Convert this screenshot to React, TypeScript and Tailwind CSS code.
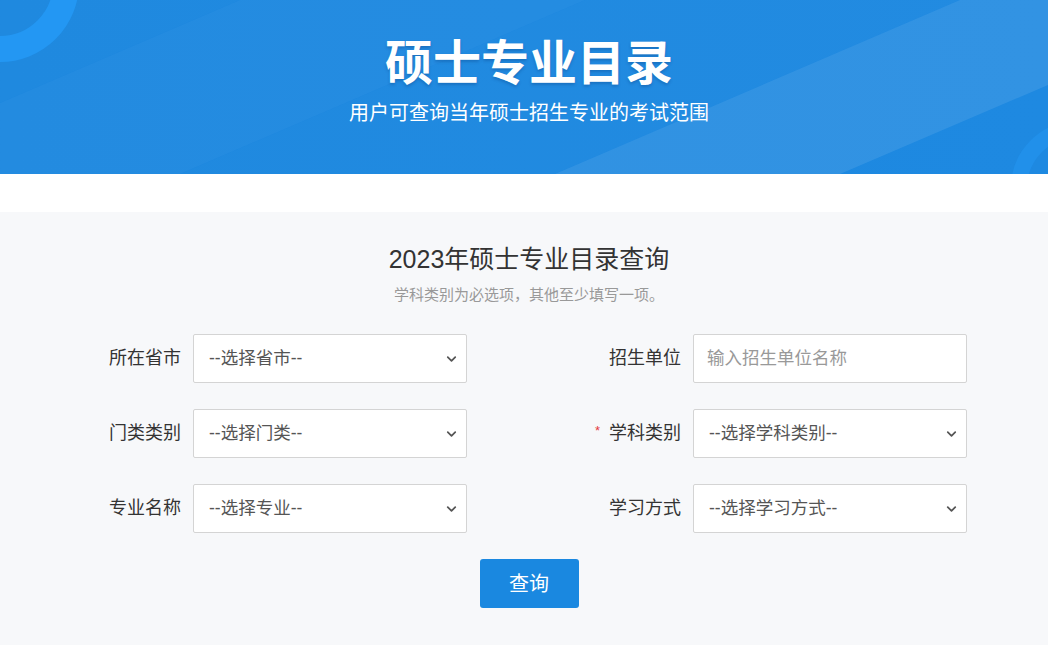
import React, { useState } from 'react';
import { ChevronDown } from 'lucide-react';

const FONT = "font-['Liberation_Sans','Noto_Sans_CJK_SC',sans-serif]";

interface FieldProps {
  label: string;
  required?: boolean;
  children: React.ReactNode;
}

const Field: React.FC<FieldProps> = ({ label, required, children }) => (
  <div className="flex items-center">
    <div className="w-[157px] pr-[12px] flex items-center justify-end text-[18px] text-[#333]">
      {required && <span className="text-[#e4393c] text-[13px] mr-[9px] -mt-[6px]">*</span>}
      {label}
    </div>
    <div className="w-[274px] h-[49px]">{children}</div>
  </div>
);

const SelectBox: React.FC<{ placeholder: string }> = ({ placeholder }) => {
  const [value, setValue] = useState('');
  return (
    <div className="relative w-full h-full">
      <select
        value={value}
        onChange={e => setValue(e.target.value)}
        className={`${FONT} appearance-none w-full h-full bg-white border border-[#d4d4d4] rounded-[2px] pl-[15px] pr-8 text-[17.5px] text-[#555] outline-none`}
      >
        <option value="">{placeholder}</option>
      </select>
      <ChevronDown
        size={15}
        strokeWidth={2.8}
        className="absolute right-[8px] top-1/2 -translate-y-1/2 text-[#555] pointer-events-none"
      />
    </div>
  );
};

const App: React.FC = () => {
  const [unit, setUnit] = useState('');

  return (
    <div className={`${FONT} w-full min-h-[652px] bg-white`}>
      {/* banner */}
      <div className="relative h-[174px] overflow-hidden bg-gradient-to-r from-[#1b87df] to-[#1e89e1]">
        <svg className="absolute inset-0 w-full h-full" viewBox="0 0 1048 174" preserveAspectRatio="none">
          <polygon points="0,0 240,0 0,103" fill="#ffffff" opacity="0.02" />
          <polygon points="0,103 240,0 585,0 180,174 0,174" fill="#ffffff" opacity="0.035" />
          <polygon points="585,0 960,0 555,174 180,174" fill="#ffffff" opacity="0.02" />
          <polygon points="555,174 960,0 1048,0 1048,85 840,174" fill="#ffffff" opacity="0.09" />
          <circle cx="0" cy="-17" r="66" fill="none" stroke="#2397f3" strokeWidth="26" />
          <circle cx="1078" cy="188" r="59" fill="none" stroke="#2190ea" strokeWidth="16" />
        </svg>
        <div className="relative flex flex-col items-center pt-[40px] pl-[10px] text-white">
          <h1 className="text-[48px] leading-[48px] font-bold [text-shadow:0_2px_3px_rgba(0,40,100,0.25)]">硕士专业目录</h1>
          <p className="mt-[15px] text-[20px] leading-[20px]">用户可查询当年硕士招生专业的考试范围</p>
        </div>
      </div>

      <div className="h-[38px] bg-white" />

      {/* query form */}
      <div className="bg-[#f7f8fa] pt-[35px] pb-[37px] pl-[10px]">
        <h2 className="text-center text-[25px] leading-[25px] text-[#333]">2023年硕士专业目录查询</h2>
        <p className="mt-[15px] text-center text-[15px] leading-[15px] text-[#999]">学科类别为必选项，其他至少填写一项。</p>

        <div className="mt-[32px] w-[1000px] ml-[26px] grid grid-cols-2 gap-y-[26px]">
          <Field label="所在省市">
            <SelectBox placeholder="--选择省市--" />
          </Field>
          <Field label="招生单位">
            <input
              value={unit}
              onChange={e => setUnit(e.target.value)}
              placeholder="输入招生单位名称"
              className={`${FONT} w-full h-full bg-white border border-[#d4d4d4] rounded-[2px] px-[13px] text-[17.5px] text-[#555] placeholder:text-[#999] outline-none`}
            />
          </Field>
          <Field label="门类类别">
            <SelectBox placeholder="--选择门类--" />
          </Field>
          <Field label="学科类别" required>
            <SelectBox placeholder="--选择学科类别--" />
          </Field>
          <Field label="专业名称">
            <SelectBox placeholder="--选择专业--" />
          </Field>
          <Field label="学习方式">
            <SelectBox placeholder="--选择学习方式--" />
          </Field>
        </div>

        <div className="mt-[26px] flex justify-center">
          <button
            type="button"
            className="w-[99px] h-[49px] rounded-[3px] bg-[#1a88e0] text-white text-[20px]"
          >
            查询
          </button>
        </div>
      </div>
    </div>
  );
};

export default App;
